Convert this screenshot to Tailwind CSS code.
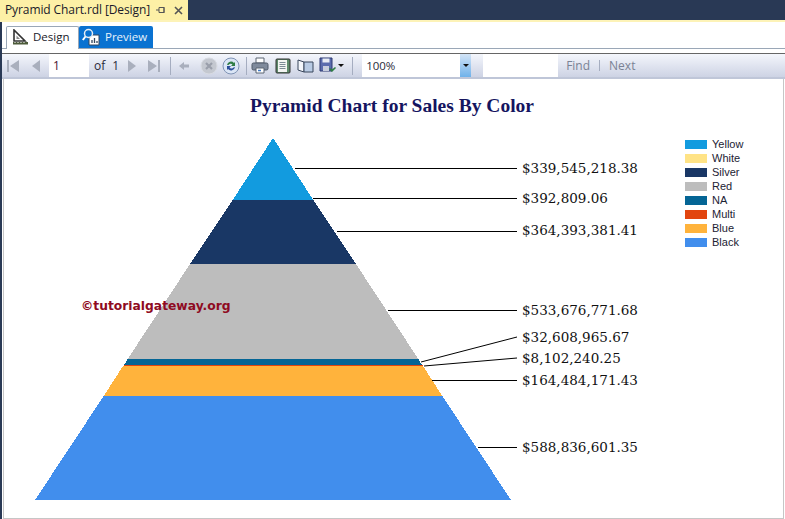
<!DOCTYPE html>
<html lang="en">
<head>
  <meta charset="UTF-8" />
  <title>Pyramid Chart.rdl [Design]</title>
  <script src="https://cdn.jsdelivr.net/npm/@tailwindcss/browser@4"></script>
</head>
<body class="w-[785px] h-[519px] overflow-hidden bg-white font-['Liberation_Sans',sans-serif]">

<!-- document tab strip -->
<div class="h-[20px] bg-[#293955] flex">
  <div class="w-[188px] bg-[#fdf0a6] flex items-center pl-[5px] text-[12px] text-[#1a1a2a] font-['Open_Sans',sans-serif] tracking-[-0.1px]">
    <span class="w-[150px] whitespace-nowrap">Pyramid Chart.rdl [Design]</span>
    <svg width="12" height="12" viewBox="0 0 12 12"><path d="M1 6h3M4 3.500h5v5H4zM9 3v6" fill="none" stroke="#555" stroke-width="1"/></svg>
    <svg width="11" height="11" viewBox="0 0 11 11" class="ml-[6px]"><path d="M2 2l7 7M9 2l-7 7" stroke="#555" stroke-width="1.600"/></svg>
  </div>
</div>
<div class="h-[2px] bg-[#fdf3b8]"></div>

<div class="h-[497px] border-l-[2px] border-l-[#293955] flex flex-col">
  <!-- design / preview tabs -->
  <div class="h-[27px] border-b border-b-[#9aa7b7] flex items-end pl-[4px] font-['Open_Sans',sans-serif] text-[11.500px]">
    <div class="w-[73px] h-[23px] border border-b-0 border-[#9aa7b7] rounded-t-[2px] bg-white flex items-center gap-[4px] pl-[5px] pb-[2px] relative top-px text-[#1a1a2a]">
      <svg width="17" height="16" viewBox="0 0 17 16"><path d="M2 1v11h11z" fill="none" stroke="#333" stroke-width="1.600"/><path d="M4.500 6.500v3.500h3.500z" fill="#888"/><path d="M1 13h15v2.500H1z" fill="#4d5b3a"/><path d="M3 13v1M6 13v1M9 13v1M12 13v1" stroke="#fff"/></svg>
      <span>Design</span>
    </div>
    <div class="w-[74px] h-[22px] rounded-t-[2px] bg-[#0a72d1] flex items-center gap-[5px] pl-[3px] pb-[1px] text-[#e8f2fb]">
      <svg width="18" height="18" viewBox="0 0 18 18"><path d="M7 7h10v10H7z" fill="#fff" stroke="#33475f"/><path d="M10 15v-3M12.500 15v-5M15 15v-2" stroke="#33475f" stroke-width="1.300"/><circle cx="6.500" cy="5.500" r="4" fill="#0a72d1" stroke="#e9eef3" stroke-width="1.500"/><path d="M3.500 8.500L0.800 12" stroke="#fff" stroke-width="2"/></svg>
      <span>Preview</span>
    </div>
  </div>
  <div class="h-[4px]"></div>
  <div class="h-[1px] bg-[#666]"></div>

  <!-- report toolbar -->
  <div class="h-[25px] border-b-[2px] border-b-[#bfc6d8] flex items-center text-[12px] bg-gradient-to-b from-[#f4f6fc] to-[#cdd3e4] font-['Open_Sans',sans-serif]">
    <svg width="16" height="14" viewBox="0 0 16 14" class="ml-[3px]"><path d="M2 1h2v12H2zM14 1v12L5 7z" fill="#a9afbd"/></svg>
    <svg width="12" height="14" viewBox="0 0 12 14" class="ml-[9px]"><path d="M10 1v12L2 7z" fill="#a9afbd"/></svg>
    <div class="ml-[7px] w-[40px] h-full bg-white pl-[4px] leading-[23px] text-[#4a1030]">1</div>
    <span class="ml-[5px] text-[#2a2a3a]">of</span>
    <span class="ml-[7px] text-[#2a2a3a]">1</span>
    <svg width="12" height="14" viewBox="0 0 12 14" class="ml-[7px]"><path d="M2 1v12l8-6z" fill="#a9afbd"/></svg>
    <svg width="16" height="14" viewBox="0 0 16 14" class="ml-[8px]"><path d="M12 1h2v12h-2zM2 1v12l9-6z" fill="#a9afbd"/></svg>
    <div class="ml-[8px] w-px h-[18px] bg-[#a5adc0]"></div>
    <svg width="12" height="10" viewBox="0 0 12 10" class="ml-[7px]"><path d="M1 5l5-4v2.500h5v3H6V9z" fill="#a9afbd"/></svg>
    <svg width="18" height="18" viewBox="0 0 18 18" class="ml-[10px]"><circle cx="9" cy="9" r="8" fill="#c4c8d0" stroke="#d8dbe2"/><path d="M6 6l6 6M12 6l-6 6" stroke="#9a9fab" stroke-width="2.200"/></svg>
    <svg width="18" height="18" viewBox="0 0 18 18" class="ml-[4px]"><circle cx="9" cy="9" r="8" fill="#dbe6f6" stroke="#7f93b5"/><path d="M5 8a4 4 0 0 1 7-2l1-1v4H9l1.500-1.500A2.500 2.500 0 0 0 6.500 8z" fill="#2f7d45"/><path d="M13 10a4 4 0 0 1-7 2l-1 1V9h4l-1.500 1.500a2.500 2.500 0 0 0 4 0z" fill="#2b4f9a"/></svg>
    <div class="ml-[6px] w-px h-[18px] bg-[#a5adc0]"></div>
    <svg width="18" height="17" viewBox="0 0 18 17" class="ml-[4px]"><path d="M5 1h8v5H5z" fill="#fff" stroke="#5a6473"/><rect x="1" y="6" width="16" height="7" rx="1.500" fill="#7f8a9c" stroke="#4e5868"/><path d="M5 11h8v5H5z" fill="#fff" stroke="#5a6473"/><path d="M7 13.500h3" stroke="#3d78c7" stroke-width="1.500"/></svg>
    <svg width="16" height="16" viewBox="0 0 16 16" class="ml-[6px]"><rect x="1" y="1" width="14" height="14" rx="1" fill="#5f8a6c" stroke="#333"/><path d="M3 2h9v12H3z" fill="#f3f5f2"/><path d="M4.500 4.500h6M4.500 6.500h6M4.500 8.500h6M4.500 10.500h6" stroke="#7b8a95"/></svg>
    <svg width="17" height="14" viewBox="0 0 17 14" class="ml-[6px]"><path d="M1 1l6 2v10l-6-2z" fill="#f3f6fb" stroke="#39465c"/><path d="M7 3h9v10H7z" fill="#b9cbe4" stroke="#39465c"/></svg>
    <svg width="18" height="17" viewBox="0 0 18 17" class="ml-[5px]"><path d="M1 1h12v13H1z" fill="#5b6cae" stroke="#2d3870"/><path d="M3.500 1.500h7v4h-7z" fill="#e8ecf5"/><path d="M4 9h6v5H4z" fill="#c8cede"/><path d="M10 12l3 3 4-4-1-1-3 2.500-2-1.500z" fill="#2f7d45"/></svg>
    <svg width="6" height="3" viewBox="0 0 6 3" class="ml-[1px]"><path d="M0 0h6L3 3z" fill="#111"/></svg>
    <div class="ml-[8px] w-px h-[18px] bg-[#a5adc0]"></div>
    <div class="ml-[9px] w-[98px] h-full bg-white pl-[4px] leading-[23px] text-[#2a2a3a] text-[11.500px]">100%</div>
    <div class="w-[11px] h-full bg-gradient-to-b from-[#d3e4f6] to-[#6fb2ea] flex items-center justify-center">
      <svg width="6" height="3" viewBox="0 0 6 3"><path d="M0 0h6L3 3z" fill="#111"/></svg>
    </div>
    <div class="ml-[12px] w-[75px] h-full bg-white"></div>
    <span class="ml-[8px] text-[#7a8294]">Find</span>
    <div class="ml-[9px] w-px h-[11px] bg-[#a5adc0]"></div>
    <span class="ml-[9px] text-[#7a8294]">Next</span>
  </div>

  <!-- report canvas -->
  <div class="relative flex-1 ml-px mr-px border-l border-r border-b border-[#c6c6c6]">
    <h1 class="absolute left-[0] top-[16px] w-[780px] pl-[246px] text-[19.500px] leading-[22px] font-bold whitespace-nowrap text-[#15155f] font-['Liberation_Serif',serif]">Pyramid Chart for Sales By Color</h1>

    <svg width="780" height="440" viewBox="4 79 780 440" class="absolute left-0 top-0">
      <g shape-rendering="crispEdges">
        <polygon points="273,138 313,199.500 233,199.500" fill="#129bdf"/>
        <polygon points="233,199.500 313,199.500 356,264 190,264" fill="#193765"/>
        <polygon points="190,264 356,264 418,358.500 128,358.500" fill="#bdbdbd"/>
        <polygon points="128,358.500 418,358.500 422,365 124,365" fill="#046595"/>
        <polygon points="124,365 422,365 423,366 123,366" fill="#e2450f"/>
        <polygon points="123,366 423,366 442,395.500 104,395.500" fill="#ffb33c"/>
        <polygon points="104,395.500 442,395.500 511,500 35,500" fill="#418eed"/>
      </g>
      <g stroke="#000" stroke-width="1" fill="none">
        <path d="M295 168.500H517M313 198.500H517M337 231.500H517M388 310.500H517M432 380.500H517M478 447.500H517"/>
        <path d="M421 362L517 337M424 366L517 358"/>
      </g>
      <g font-family="'DejaVu Serif',serif" font-size="13.500" fill="#111">
        <text x="522" y="173">$339,545,218.38</text>
        <text x="522" y="203">$392,809.06</text>
        <text x="522" y="235">$364,393,381.41</text>
        <text x="522" y="315">$533,676,771.68</text>
        <text x="522" y="342">$32,608,965.67</text>
        <text x="522" y="363">$8,102,240.25</text>
        <text x="522" y="385">$164,484,171.43</text>
        <text x="522" y="452">$588,836,601.35</text>
      </g>
    </svg>

    <div class="absolute left-[77px] top-[219px] text-[12.300px] leading-[16px] font-bold whitespace-nowrap text-[#8f0a22] font-['DejaVu_Sans',sans-serif]">©tutorialgateway.org</div>

    <ul class="absolute left-[681px] top-[61px] flex flex-col gap-[5px] text-[11px] leading-[9px] text-[#1c2233]">
      <li class="flex items-center gap-[5px]"><span class="w-[22px] h-[9px] bg-[#129bdf]"></span>Yellow</li>
      <li class="flex items-center gap-[5px]"><span class="w-[22px] h-[9px] bg-[#ffe386]"></span>White</li>
      <li class="flex items-center gap-[5px]"><span class="w-[22px] h-[9px] bg-[#193765]"></span>Silver</li>
      <li class="flex items-center gap-[5px]"><span class="w-[22px] h-[9px] bg-[#bdbdbd]"></span>Red</li>
      <li class="flex items-center gap-[5px]"><span class="w-[22px] h-[9px] bg-[#046595]"></span>NA</li>
      <li class="flex items-center gap-[5px]"><span class="w-[22px] h-[9px] bg-[#e2450f]"></span>Multi</li>
      <li class="flex items-center gap-[5px]"><span class="w-[22px] h-[9px] bg-[#ffb33c]"></span>Blue</li>
      <li class="flex items-center gap-[5px]"><span class="w-[22px] h-[9px] bg-[#418eed]"></span>Black</li>
    </ul>
  </div>
</div>

</body>
</html>
